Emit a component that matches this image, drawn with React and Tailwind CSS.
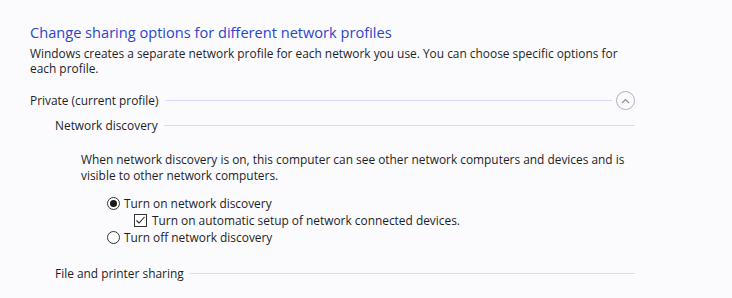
import React, { useState } from 'react';

const Section = ({ label, indent, extra, lineEnd = 'pr-[97px]' }) => (
  <div className={`flex items-center ${indent} ${lineEnd}`}>
    <span className="whitespace-nowrap">{label}</span>
    <div className="ml-[6px] h-px flex-1 bg-[#d7d9ff]" />
    {extra}
  </div>
);

const Radio = ({ checked, onClick }) => (
  <span
    onClick={onClick}
    className="flex h-[13px] w-[13px] items-center justify-center rounded-full border border-[#333] bg-white"
  >
    {checked && <span className="h-[7px] w-[7px] rounded-full bg-[#1a1a1a]" />}
  </span>
);

const App = () => {
  const [discovery, setDiscovery] = useState(true);
  const [autoSetup, setAutoSetup] = useState(true);

  return (
    <div
      className="h-[298px] w-[732px] overflow-hidden bg-[#fbfbfe] text-[11.9px] text-[#1e1e1e]"
      style={{ fontFamily: '"Open Sans", "Noto Sans", sans-serif' }}
    >
      <h1 className="pl-[30px] pt-[21px] text-[14.6px] leading-[22px] text-[#2b45c9]">
        Change sharing options for different network profiles
      </h1>
      <p className="mt-[3px] pl-[30px] leading-[15px]">
        Windows creates a separate network profile for each network you use. You can choose specific options for
        <br />
        each profile.
      </p>

      <div className="mt-[15px]">
        <Section
          label="Private (current profile)"
          indent="pl-[30px]"
          lineEnd="pr-[97px]"
          extra={
            <span className="ml-[4px] flex h-[19px] w-[19px] items-center justify-center rounded-full border border-[#aeb0c8]">
              <svg width="9" height="6" viewBox="0 0 9 6">
                <path d="M1 5 L4.5 1.5 L8 5" fill="none" stroke="#8a8ca0" strokeWidth="1.2" />
              </svg>
            </span>
          }
        />
      </div>

      <div className="mt-[7px]">
        <Section label="Network discovery" indent="pl-[55px]" lineEnd="pr-[97px]" />
      </div>

      <p className="mt-[16px] pl-[81px] pr-[100px] leading-[16px]">
        When network discovery is on, this computer can see other network computers and devices and is
        <br />
        visible to other network computers.
      </p>

      <div className="mt-[12px] pl-[107px] leading-[17px]">
        <label className="flex items-center gap-[4px]" onClick={() => setDiscovery(true)}>
          <Radio checked={discovery} />
          <span>Turn on network discovery</span>
        </label>
        <label className="ml-[27px] flex items-center gap-[5px]" onClick={() => setAutoSetup(!autoSetup)}>
          <span className="flex h-[13px] w-[13px] items-center justify-center border border-[#333] bg-white">
            {autoSetup && (
              <svg width="11" height="9" viewBox="0 0 11 9">
                <path d="M1.5 4.5 L4 7 L9.5 1" fill="none" stroke="#222" strokeWidth="1.1" />
              </svg>
            )}
          </span>
          <span>Turn on automatic setup of network connected devices.</span>
        </label>
        <label className="flex items-center gap-[4px]" onClick={() => setDiscovery(false)}>
          <Radio checked={!discovery} />
          <span>Turn off network discovery</span>
        </label>
      </div>

      <div className="mt-[19px]">
        <Section label="File and printer sharing" indent="pl-[55px]" lineEnd="pr-[97px]" />
      </div>
    </div>
  );
};

export default App;
